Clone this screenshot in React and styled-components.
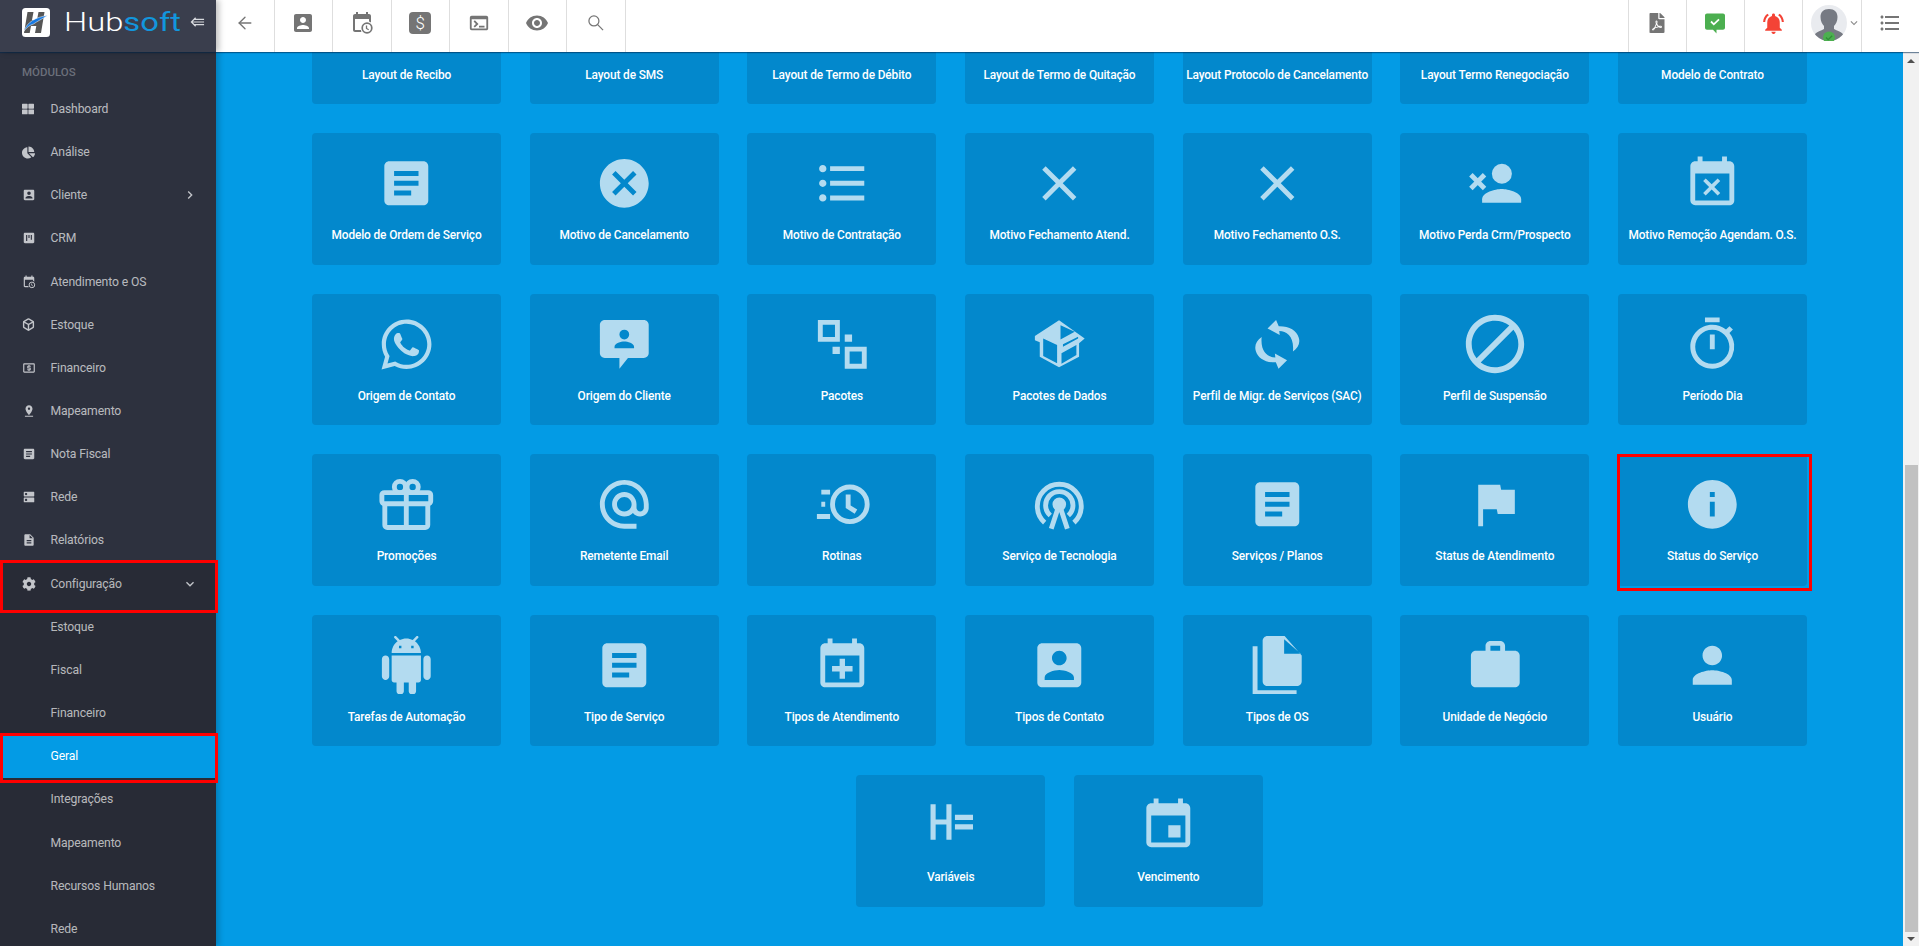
import styled, { createGlobalStyle } from 'styled-components';
import {
  MdAlternateEmail, MdArticle, MdBlock, MdCancel, MdChevronRight, MdClose,
  MdDescription, MdDns, MdEvent, MdEventBusy, MdExpandMore, MdFlag, MdFormatListBulleted,
  MdInfo, MdLocalAtm, MdNotificationsActive, MdOutlineTimer, MdPerson,
  MdPinDrop, MdTerminal, MdViewKanban, MdVisibility, MdWork,
} from 'react-icons/md';
import { FaChartPie, FaCog, FaFilePdf, FaThLarge, FaWhatsapp } from 'react-icons/fa';
import { ArrowLeft, Box } from 'lucide-react';

const GlobalStyle = createGlobalStyle`
  html, body { margin: 0; padding: 0; height: 100%; overflow: hidden; }
  body { font-family: Roboto, "Liberation Sans", sans-serif; background: #039be5; }
  * { box-sizing: border-box; }
`;

const Page = styled.div`
  width: 1919px;
  height: 946px;
  display: flex;
  flex-direction: column;
  overflow: hidden;
`;

const TopBar = styled.header`
  height: 52px;
  flex: none;
  display: flex;
  background: #fff;
  box-shadow: 0 1px 1px rgba(0, 40, 80, 0.55);
  position: relative;
  z-index: 3;
`;

const Brand = styled.div`
  width: 216px;
  flex: none;
  display: flex;
  align-items: flex-start;
  padding: 8px 0 0 22px;
  background: #3a3e4d;
  box-shadow: 3px 0 6px rgba(0, 0, 0, 0.25);
  color: #d7d9de;
`;

const BrandName = styled.div`
  margin: 0 0 0 14px;
  width: 118px;
  font-size: 25px;
  font-weight: 300;
  line-height: 29px;
  color: #fff;
  white-space: nowrap;
  transform: scaleX(1.31);
  transform-origin: left center;

  span { color: #1296dd; font-weight: 400; }
`;

const Collapse = styled.div`
  margin: 8px 0 0 8px;
  display: flex;
`;

const Tools = styled.nav`
  display: flex;
  flex: 1;
`;

const Tool = styled.div`
  width: ${(p) => (p.$right ? '58.3px' : '58.5px')};
  flex: none;
  display: flex;
  align-items: center;
  justify-content: center;
  padding-bottom: 6px;
  color: ${(p) => p.$color || '#757575'};
  border-right: ${(p) => (p.$right ? 'none' : '1px solid #dedede')};
  border-left: ${(p) => (p.$right ? '1px solid #dedede' : 'none')};
`;

const DollarBadge = styled.span`
  width: 22px;
  height: 22px;
  display: flex;
  align-items: center;
  justify-content: center;
  border-radius: 4px;
  background: #757575;
  color: #fff;
  font-size: 17px;
  font-weight: 300;
`;

const AvatarWrap = styled.div`
  display: flex;
  align-items: center;
  margin-left: 7px;
  color: #8b8b8b;
`;

const Body = styled.div`
  flex: 1;
  display: flex;
  min-height: 0;
`;

const Sidebar = styled.aside`
  width: 216px;
  flex: none;
  background: #2d313e;
  box-shadow: 3px 0 6px rgba(0, 0, 0, 0.2);
  position: relative;
  z-index: 2;
`;

const SectionLabel = styled.div`
  height: 35.3px;
  padding: 13px 0 0 22px;
  font-size: 11.5px;
  line-height: 14px;
  font-weight: 500;
  color: #6b6f7a;
`;

const NavItem = styled.div`
  position: relative;
  height: ${(p) => 43.16 + (p.$extra || 0)}px;
  margin-bottom: ${(p) => -(p.$extra || 0)}px;
  padding-bottom: ${(p) => p.$extra || 0}px;
  display: flex;
  align-items: center;
  padding-left: ${(p) => (p.$sub ? '50.5px' : '22px')};
  padding-right: 18px;
  font-size: 12.2px;
  letter-spacing: -0.12px;
  color: ${(p) => (p.$active ? '#fff' : 'rgba(255,255,255,.68)')};
  background: ${(p) => (p.$active ? '#039be5' : p.$dark ? '#282b36' : 'transparent')};

  ${(p) => p.$frame && `
    &::after {
      content: '';
      position: absolute;
      z-index: 1;
      left: 0;
      right: -2px;
      top: ${p.$frame}px;
      bottom: 0;
      border: 3px solid #f00;
    }
  `}
`;

const NavIcon = styled.span`
  width: 28.5px;
  flex: none;
  display: flex;
  color: #c3c5ca;

  svg { width: ${(p) => p.$size || 14}px; height: ${(p) => p.$size || 14}px; }
`;

const NavText = styled.span`
  flex: 1;
`;

const NavCaret = styled.span`
  display: flex;
  color: #c3c5ca;
`;

const Main = styled.main`
  flex: 1;
  min-width: 0;
  overflow: hidden;
  background: #039be5;
`;

const CardWrap = styled.div`
  width: 1496px;
  margin: -79.5px auto 0;
  display: flex;
  flex-wrap: wrap;
  justify-content: center;
  column-gap: 28.67px;
  row-gap: 29px;
`;

const Card = styled.div`
  position: relative;
  width: 189px;
  height: 131.5px;
  padding-top: 20.5px;
  border-radius: 4px;
  background: #0388cc;
  display: flex;
  flex-direction: column;
  align-items: center;

  ${(p) => p.$marked && `
    &::after {
      content: '';
      position: absolute;
      top: 0;
      left: -1px;
      right: -5px;
      bottom: -5px;
      border: 3px solid #f00;
    }
  `}
`;

const IconSlot = styled.div`
  height: 60px;
  display: flex;
  align-items: center;
  justify-content: center;
  color: #b3dbf0;

  svg { width: ${(p) => p.$size || 58.6}px; height: ${(p) => p.$size || 58.6}px; flex: none; }
`;

const CardLabel = styled.div`
  margin-top: 13.5px;
  font-size: 11.9px;
  line-height: 16px;
  font-weight: 500;
  letter-spacing: -0.13px;
  color: #fff;
  white-space: nowrap;
`;

const ScrollTrack = styled.div`
  width: 16px;
  flex: none;
  display: flex;
  flex-direction: column;
  background: #f1f1f1;
`;

const ScrollButton = styled.div`
  height: ${(p) => p.$h}px;
  flex: none;
  display: flex;
  align-items: center;
  justify-content: center;

  &::before {
    content: '';
    border-left: 4px solid transparent;
    border-right: 4px solid transparent;
    ${(p) => (p.$down ? 'border-top: 4px solid #505050;' : 'border-bottom: 4px solid #505050;')}
  }
`;

const ScrollGap = styled.div`
  flex: 1;
`;

const ScrollThumb = styled.div`
  height: 467px;
  flex: none;
  margin: 0 1px 0 2px;
  background: #c1c1c1;
`;

const Icon = ({ children, size = '1em', ...rest }) => (
  <svg viewBox="0 0 24 24" width={size} height={size} fill="currentColor" {...rest}>{children}</svg>
);

const Line = ({ children, size = '1em', weight = 2 }) => (
  <svg viewBox="0 0 24 24" width={size} height={size} fill="none" stroke="currentColor" strokeWidth={weight}>{children}</svg>
);

const CAL = 'M19 3h-1V1h-2v2H8V1H6v2H5c-1.11 0-1.99.9-1.99 2L3 19c0 1.1.89 2 2 2h14c1.1 0 2-.9 2-2V5c0-1.1-.9-2-2-2zm0 16H5V8h14v11z';

const AccountBox = ({ size }) => (
  <Icon size={size}>
    <path fillRule="evenodd" d="M19 3H5c-1.11 0-2 .9-2 2v14c0 1.1.89 2 2 2h14c1.1 0 2-.9 2-2V5c0-1.1-.9-2-2-2zm-7 3c1.65 0 3 1.35 3 3s-1.35 3-3 3-3-1.35-3-3 1.350-3 3-3zm6 12H6v-1c0-2 4-3.100 6-3.100s6 1.100 6 3.100v1z" />
  </Icon>
);

const PersonBubble = () => (
  <Icon>
    <path fillRule="evenodd" d="M20 2H4c-1.100 0-2 .9-2 2v11.600c0 1.100.9 2 2 2h6V22l3.500-4.400H20c1.100 0 2-.9 2-2V4c0-1.100-.9-2-2-2zM12 6a2 2 0 1 1 0 4 2 2 0 0 1 0-4zM8 13.600v-.6c0-1.400 2.700-2.100 4-2.100s4 .7 4 2.100v.6z" />
  </Icon>
);

const PersonX = () => (
  <Icon>
    <circle cx="14.7" cy="8.1" r="4.1" />
    <path d="M6.600 20v-1.500c0-2.800 5.400-4.200 8-4.200s8 1.400 8 4.200V20z" />
    <path d="M2 8.500l5.600 5.600M7.600 8.500L2 14.100" stroke="currentColor" strokeWidth="2" />
  </Icon>
);

const Squares = () => (
  <Icon>
    <path fillRule="evenodd" d="M2 2h9v9H2zM4 4v5h5V4zM13 13h9v9h-9zM15 15v5h5v-5zM13 8h3v3h-3zM8 13h3v3H8z" />
  </Icon>
);

const OpenBox = () => (
  <Icon>
    <path
      fillRule="evenodd"
      d="M11.900 2.100L22.400 9.600 20.100 11.600V17.100L11.900 21.400 4 17.100V11.200L2 10.300V8.600zM12.500 4.200V10L18.300 6.900zM5.400 9.600L11.100 12.300V19.800L5.400 16.800zM12.900 15.700L19 12.300V16.400L12.900 20zM13.500 12L19.700 8.900V9.600L13.500 13z"
    />
  </Icon>
);

const SyncArrows = () => (
  <Icon>
    <path d="M11.500 2L8 5.500l5 2.700-.2-1.600c3.200 0 6.200 2.400 5.600 8.400 2.100-1.500 3.100-3.500 2.400-5.700-.8-3-4-4.800-8.200-4.700z" />
    <path d="M11.500 2L8 5.500l5 2.700-.2-1.600c3.200 0 6.200 2.400 5.600 8.400 2.100-1.500 3.100-3.500 2.400-5.700-.8-3-4-4.800-8.200-4.700z" transform="rotate(180 12 12)" />
  </Icon>
);

const GiftBox = () => (
  <Line>
    <rect x="2" y="7.200" width="20" height="4.600" rx="1" />
    <path d="M3.200 11.800v8.700a1 1 0 0 0 1 1h15.600a1 1 0 0 0 1-1v-8.700M12 7.200v14.300" />
    <circle cx="9.400" cy="4.900" r="2.300" />
    <circle cx="14.600" cy="4.900" r="2.300" />
  </Line>
);

const FastClock = () => (
  <Line>
    <circle cx="15.100" cy="12" r="7.100" />
    <path d="M14.400 8v5l3.200 2M3.400 7H7M3.400 12H5M1.600 17H7" />
  </Line>
);

const Antenna = () => (
  <Line>
    <path d="M6 19.500A9 9 0 1 1 18 19.500M8.300 16.600A5.600 5.600 0 1 1 15.700 16.600" />
    <circle cx="12" cy="12" r="1.800" fill="currentColor" />
    <path d="M12 12L8.700 22M12 12l3.300 10" />
  </Line>
);

const AndroidOld = () => (
  <Icon>
    <path d="M6 18c0 .55.45 1 1 1h1v3.500c0 .83.67 1.500 1.500 1.500s1.500-.67 1.500-1.500V19h2v3.500c0 .83.67 1.500 1.500 1.500s1.500-.67 1.500-1.500V19h1c.55 0 1-.45 1-1V8H6v10zM3.500 8C2.670 8 2 8.670 2 9.500v7c0 .83.67 1.500 1.500 1.500S5 17.330 5 16.500v-7C5 8.670 4.330 8 3.500 8zm17 0c-.83 0-1.500.67-1.500 1.500v7c0 .83.67 1.500 1.500 1.500s1.500-.67 1.500-1.500v-7c0-.83-.67-1.500-1.500-1.500zm-4.970-5.840l1.300-1.300c.2-.2.2-.51 0-.71-.2-.2-.51-.2-.71 0l-1.480 1.480C13.850 1.230 12.950 1 12 1c-.96 0-1.860.23-2.660.63L7.850.15c-.2-.2-.51-.2-.71 0-.2.2-.2.51 0 .71l1.310 1.310C6.970 3.260 6 5.010 6 7h12c0-1.990-.97-3.750-2.470-4.840zM10 5H9V4h1v1zm5 0h-1V4h1v1z" />
  </Icon>
);

const CalendarPlus = () => (
  <Icon><path d={CAL} /><path d="M10.900 9.300h2.200v3h3.100v2.200h-3.100v3h-2.200v-3H7.800v-2.200h3.100z" /></Icon>
);

const Copies = () => (
  <Icon>
    <path fillRule="evenodd" d="M1.900 4.200h2v18h16v2h-18zM8 0h7l7 8v10.500c0 1.100-.9 2-2 2H8c-1.100 0-2-.9-2-2V2c0-1.100.9-2 2-2zM14.800 1.300v6h6.800z" />
  </Icon>
);

const Variables = () => (
  <Icon>
    <path d="M3.900 3.400H6v6.200h4.400V3.400h2.100v14.500h-2.100v-6.200H6v6.200H3.900zM13.900 7.700h7.400v2.100h-7.400zM13.900 11.600h7.400v2.100h-7.400z" />
  </Icon>
);

const CalendarClock = ({ size = 24 }) => (
  <svg viewBox="0 0 24 24" width={size} height={size} fill="currentColor">
    <path d="M19 3h-1V1h-2v2H8V1H6v2H5c-1.100 0-2 .9-2 2v14c0 1.100.9 2 2 2h6.400a6.500 6.500 0 0 1-.4-2H5V8h14v2.400c.7.2 1.400.5 2 1V5c0-1.100-.9-2-2-2z" />
    <circle cx="17" cy="17" r="4.800" fill="none" stroke="currentColor" strokeWidth="1.700" />
    <path d="M16.500 14.500v3l2.200 1.300" fill="none" stroke="currentColor" strokeWidth="1.300" />
  </svg>
);

const CollapseArrow = () => (
  <svg viewBox="0 0 16 12" width="15" height="12" fill="none" stroke="currentColor" strokeWidth="1.300">
    <path d="M6 1.500L1.500 6 6 10.500M2 6h13M4.500 3.200H15M4.500 8.800H15" />
  </svg>
);

const Logo = () => (
  <svg viewBox="0 0 28 29" width="28" height="29">
    <rect width="28" height="29" rx="3.500" fill="#fff" />
    <path d="M5.500 4h6L10 12h5l1.500-8h6L19 25h-6l1.300-7H9l-1.300 7H2z" fill="#565656" />
    <path d="M2 23C5 14 14 9 25.500 7.500 20 11 15 13.500 11.500 16 8 17 5 19 2 23z" fill="#1679e2" stroke="#fff" strokeWidth=".5" />
  </svg>
);

const Avatar = () => (
  <svg viewBox="0 0 36 36" width="36" height="36">
    <defs>
      <clipPath id="avatarClip"><circle cx="18" cy="18" r="18" /></clipPath>
    </defs>
    <g clipPath="url(#avatarClip)">
      <rect width="36" height="36" fill="#e9ebef" />
      <path d="M18 4c5.500 0 8.500 3 8.500 8 0 4-1.500 7-3.500 9v3c3 2 7 2.500 9 5v7H4v-7c2-2.500 6-3 9-5v-3c-2-2-3.500-5-3.500-9 0-5 3-8 8.500-8z" fill="#767a83" />
    </g>
    <circle cx="18" cy="32.500" r="6" fill="#4caf50" />
    <path d="M15 32.500l2.200 2.200 4-4" fill="none" stroke="#2f8f35" strokeWidth="1.300" />
  </svg>
);

const ChatCheck = () => (
  <svg viewBox="0 0 24 24" width="24" height="24">
    <path d="M4 2.500h16c1.100 0 2 .9 2 2v12.300c0 1.100-.9 2-2 2h-6.500v3.700l-3.500-3.700H4c-1.100 0-2-.9-2-2V4.500c0-1.100.9-2 2-2z" fill="#4caf50" />
    <path d="M8 10.500l2.800 2.800 5.200-5" fill="none" stroke="#fff" strokeWidth="1.800" />
  </svg>
);

const NAV = [
  { text: 'Dashboard', icon: <FaThLarge />, size: 12 },
  { text: 'Análise', icon: <FaChartPie />, size: 13 },
  { text: 'Cliente', icon: <AccountBox />, caret: <MdChevronRight size={16} /> },
  { text: 'CRM', icon: <MdViewKanban /> },
  { text: 'Atendimento e OS', icon: <CalendarClock /> },
  { text: 'Estoque', icon: <Box strokeWidth={2.6} />, size: 13 },
  { text: 'Financeiro', icon: <MdLocalAtm /> },
  { text: 'Mapeamento', icon: <MdPinDrop /> },
  { text: 'Nota Fiscal', icon: <MdArticle /> },
  { text: 'Rede', icon: <MdDns /> },
  { text: 'Relatórios', icon: <MdDescription /> },
];

const SUB_NAV = ['Estoque', 'Fiscal', 'Financeiro', 'Geral', 'Integrações', 'Mapeamento', 'Recursos Humanos', 'Rede'];

const CARDS = [
  { text: 'Layout de Recibo' },
  { text: 'Layout de SMS' },
  { text: 'Layout de Termo de Débito' },
  { text: 'Layout de Termo de Quitação' },
  { text: 'Layout Protocolo de Cancelamento' },
  { text: 'Layout Termo Renegociação' },
  { text: 'Modelo de Contrato' },
  { text: 'Modelo de Ordem de Serviço', icon: <MdArticle /> },
  { text: 'Motivo de Cancelamento', icon: <MdCancel /> },
  { text: 'Motivo de Contratação', icon: <MdFormatListBulleted /> },
  { text: 'Motivo Fechamento Atend.', icon: <MdClose /> },
  { text: 'Motivo Fechamento O.S.', icon: <MdClose /> },
  { text: 'Motivo Perda Crm/Prospecto', icon: <PersonX /> },
  { text: 'Motivo Remoção Agendam. O.S.', icon: <MdEventBusy /> },
  { text: 'Origem de Contato', icon: <FaWhatsapp />, size: 57 },
  { text: 'Origem do Cliente', icon: <PersonBubble /> },
  { text: 'Pacotes', icon: <Squares /> },
  { text: 'Pacotes de Dados', icon: <OpenBox /> },
  { text: 'Perfil de Migr. de Serviços (SAC)', icon: <SyncArrows /> },
  { text: 'Perfil de Suspensão', icon: <MdBlock />, size: 70 },
  { text: 'Período Dia', icon: <MdOutlineTimer /> },
  { text: 'Promoções', icon: <GiftBox /> },
  { text: 'Remetente Email', icon: <MdAlternateEmail /> },
  { text: 'Rotinas', icon: <FastClock /> },
  { text: 'Serviço de Tecnologia', icon: <Antenna /> },
  { text: 'Serviços / Planos', icon: <MdArticle /> },
  { text: 'Status de Atendimento', icon: <MdFlag /> },
  { text: 'Status do Serviço', icon: <MdInfo />, marked: true },
  { text: 'Tarefas de Automação', icon: <AndroidOld /> },
  { text: 'Tipo de Serviço', icon: <MdArticle /> },
  { text: 'Tipos de Atendimento', icon: <CalendarPlus /> },
  { text: 'Tipos de Contato', icon: <AccountBox /> },
  { text: 'Tipos de OS', icon: <Copies /> },
  { text: 'Unidade de Negócio', icon: <MdWork /> },
  { text: 'Usuário', icon: <MdPerson /> },
  { text: 'Variáveis', icon: <Variables /> },
  { text: 'Vencimento', icon: <MdEvent /> },
];

export default function App() {
  return (
    <Page>
      <GlobalStyle />
      <TopBar>
        <Brand>
          <Logo />
          <BrandName>Hub<span>soft</span></BrandName>
          <Collapse><CollapseArrow /></Collapse>
        </Brand>
        <Tools>
          <Tool><ArrowLeft size={20} strokeWidth={1.6} /></Tool>
          <Tool><AccountBox size={24} /></Tool>
          <Tool><CalendarClock /></Tool>
          <Tool><DollarBadge>$</DollarBadge></Tool>
          <Tool><MdTerminal size={22} /></Tool>
          <Tool><MdVisibility size={24} /></Tool>
          <Tool>
            <Line size={20} weight={1.5}>
              <circle cx="9.500" cy="9.500" r="6" />
              <path d="M14 14l6.500 6.500" />
            </Line>
          </Tool>
        </Tools>
        <Tool $right><FaFilePdf size={20} /></Tool>
        <Tool $right><ChatCheck /></Tool>
        <Tool $right $color="#f44336"><MdNotificationsActive size={25} /></Tool>
        <Tool $right>
          <AvatarWrap><Avatar /><MdExpandMore size={14} /></AvatarWrap>
        </Tool>
        <Tool $right><MdFormatListBulleted size={24} /></Tool>
      </TopBar>
      <Body>
        <Sidebar>
          <SectionLabel>MÓDULOS</SectionLabel>
          {NAV.map((item) => (
            <NavItem key={item.text}>
              <NavIcon $size={item.size}>{item.icon}</NavIcon>
              <NavText>{item.text}</NavText>
              {item.caret && <NavCaret>{item.caret}</NavCaret>}
            </NavItem>
          ))}
          <NavItem $dark $frame={-2} $extra={8}>
            <NavIcon><FaCog /></NavIcon>
            <NavText>Configuração</NavText>
            <NavCaret><MdExpandMore size={16} /></NavCaret>
          </NavItem>
          {SUB_NAV.map((text) => (
            <NavItem
              key={text}
              $sub
              $dark
              $active={text === 'Geral'}
              $frame={text === 'Geral' ? -1.5 : 0}
              $extra={text === 'Geral' ? 5 : 0}
            >
              <NavText>{text}</NavText>
            </NavItem>
          ))}
        </Sidebar>
        <Main>
          <CardWrap>
            {CARDS.map((card) => (
              <Card key={card.text} $marked={card.marked}>
                <IconSlot $size={card.size}>{card.icon}</IconSlot>
                <CardLabel>{card.text}</CardLabel>
              </Card>
            ))}
          </CardWrap>
        </Main>
        <ScrollTrack>
          <ScrollButton $h={17} />
          <ScrollGap />
          <ScrollThumb />
          <ScrollButton $h={14} $down />
        </ScrollTrack>
      </Body>
    </Page>
  );
}
